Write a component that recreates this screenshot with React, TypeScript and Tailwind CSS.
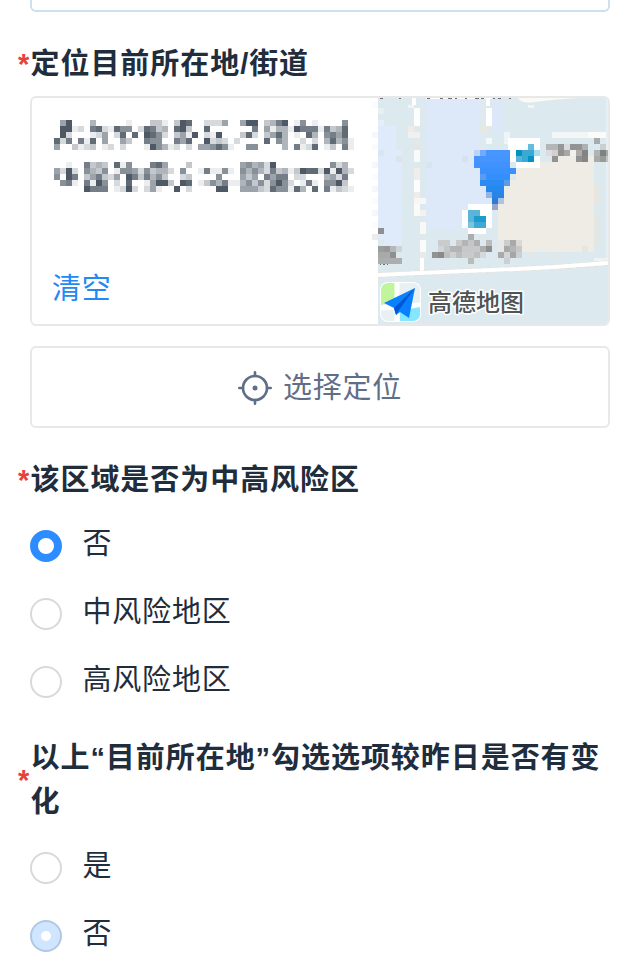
import React from "react";

const FONT = "font-['Liberation_Sans','Noto_Sans_CJK_SC',sans-serif]";

/* Censored address: each digit is the darkness of one 6px block. */
const LINE_ONE = [
  "05900040000010003310398002225005990347901601000060",
  "09912078218660287340893008000000070514419777173480",
  "09200012502808098620351902190003820358401084067580",
  "82707180500530076600758009232020000806400202048461",
  "50031230120200019641202055686100660000407128013071",
];
const LINE_TWO = [
  "00100734308160007850003000000005645290000000006240",
  "52920643601665263442060017116106464273413988291942",
  "60970357325097374630023000060005350757702200045270",
  "06710719602080015993098013647114636269620171066930",
  "00000977701292025100902000099005553286618408071321",
];

function MosaicLine({ rows }: { rows: string[] }) {
  return (
    <svg width="300" height="30" viewBox="0 0 300 30" shapeRendering="crispEdges" className="block">
      {rows.flatMap((row, y) =>
        row.split("").map((d, x) =>
          d === "0" ? null : (
            <rect key={`${x}-${y}`} x={x * 6} y={y * 6} width="6" height="6" fill="#1f2d3d" opacity={Number(d) * 0.088} />
          ),
        ),
      )}
    </svg>
  );
}

type Block = [number, number, number, number, string];

const BLOCKS: Block[] = [
  // pale zones
  [378, 120, 6, 42, "#e6eff8"],
  [378, 126, 18, 114, "#dfeafa"],
  [384, 150, 18, 96, "#dfeafa"],
  [378, 108, 6, 6, "#e6eff4"],
  [426, 98, 54, 132, "#dde9f8"],
  [480, 98, 6, 52, "#dfe9f0"],
  [432, 198, 60, 24, "#dde9f8"],
  [480, 150, 12, 60, "#dde9f8"],
  [492, 98, 12, 36, "#dce8f8"],
  [426, 162, 6, 6, "#d6e6ee"],
  [462, 156, 6, 6, "#d6e2ef"],
  [378, 150, 6, 6, "#d8e5f3"],
  [396, 156, 6, 6, "#d8e6ec"],
  // roads
  [412, 98, 4, 7, "#ffffff"],
  [408, 105, 6, 3, "#f3f3f1"],
  [414, 108, 6, 18, "#fdfdfc"],
  [408, 126, 6, 6, "#f2ebe5"],
  [408, 132, 12, 6, "#f0f1ee"],
  [414, 138, 6, 6, "#e2e9e8"],
  [414, 144, 6, 6, "#e5e5e2"],
  [414, 150, 6, 12, "#f8fbfb"],
  [414, 168, 6, 12, "#f1eeea"],
  [414, 180, 6, 12, "#fdfdfd"],
  [414, 192, 6, 6, "#efede9"],
  [414, 198, 12, 6, "#f8f7f3"],
  [414, 204, 6, 12, "#fafaf7"],
  [420, 210, 6, 6, "#f4f2ee"],
  [420, 222, 6, 12, "#f8f8f5"],
  [420, 240, 6, 12, "#fbfbfa"],
  [420, 252, 6, 6, "#e9ebe9"],
  [420, 258, 4, 16, "#ffffff"],
  [486, 98, 4, 8, "#ffffff"],
  [486, 108, 6, 18, "#ffffff"],
  [480, 126, 12, 6, "#e6e8e2"],
  [486, 138, 6, 6, "#f5f8f8"],
  [504, 132, 6, 12, "#eef5f8"],
  [528, 105, 6, 3, "#f1f5f4"],
  [552, 132, 42, 6, "#f3f6f6"],
  [588, 132, 20, 6, "#fbfbfa"],
  [606, 98, 2, 164, "#e6f0f4"],
  // building
  [516, 162, 78, 88, "#efebe5"],
  [498, 192, 96, 60, "#efebe5"],
  [504, 180, 12, 12, "#efebe5"],
  [552, 156, 42, 6, "#efebe5"],
  [594, 186, 6, 18, "#e9e6e0"],
  [594, 216, 6, 30, "#e4e6e2"],
  [498, 240, 12, 12, "#e7e9e6"],
  [528, 252, 6, 6, "#e3e7e5"],
  [552, 252, 6, 6, "#e2e7e6"],
  [582, 246, 6, 6, "#e5e6e2"],
  [594, 258, 14, 6, "#edf2f4"],
  // poi beside the pin
  [508, 138, 32, 12, "#ffffff"],
  [508, 150, 32, 12, "#ffffff"],
  [516, 162, 24, 6, "#ffffff"],
  [528, 144, 6, 6, "#66bcdc"],
  [516, 150, 6, 6, "#0092c7"],
  [522, 150, 12, 6, "#3ba9d4"],
  [534, 150, 6, 6, "#abddf0"],
  [516, 156, 6, 6, "#55b4d9"],
  [522, 156, 6, 6, "#3ba9d4"],
  [528, 156, 6, 6, "#0092c7"],
  // censored poi name
  [594, 138, 6, 6, "#a7abad"],
  [546, 144, 12, 6, "#b3b5b7"],
  [546, 150, 12, 6, "#dcdcdc"],
  [558, 144, 6, 6, "#969798"],
  [564, 144, 6, 6, "#d8dcdd"],
  [570, 144, 12, 6, "#929394"],
  [582, 144, 6, 6, "#aeb0b1"],
  [600, 144, 6, 6, "#c9ced1"],
  [552, 150, 6, 6, "#d0d0d0"],
  [558, 150, 6, 6, "#919191"],
  [564, 150, 6, 6, "#a8a7a6"],
  [570, 150, 6, 6, "#f1f0ef"],
  [576, 150, 6, 6, "#adacab"],
  [582, 150, 6, 6, "#838383"],
  [594, 150, 6, 6, "#b0b3b4"],
  [600, 150, 6, 6, "#808080"],
  [606, 150, 2, 6, "#a8abac"],
  [552, 156, 6, 6, "#929292"],
  [576, 156, 6, 6, "#929292"],
  [582, 156, 6, 6, "#858585"],
  [594, 156, 6, 6, "#a8a9aa"],
  [600, 156, 6, 6, "#999a9a"],
  [606, 156, 2, 6, "#c0c3c4"],
  // second poi
  [468, 204, 24, 6, "#ffffff"],
  [462, 210, 30, 18, "#ffffff"],
  [468, 228, 18, 6, "#ffffff"],
  [468, 210, 12, 6, "#5ab5d8"],
  [468, 216, 6, 6, "#5ab5d8"],
  [474, 216, 12, 6, "#1b9ccf"],
  [474, 222, 12, 6, "#3da9d4"],
  [468, 222, 6, 6, "#79c4e0"],
  // censored names, bottom
  [372, 234, 6, 6, "#ececec"],
  [378, 228, 6, 6, "#8f8f90"],
  [378, 246, 6, 6, "#9b9c9d"],
  [384, 246, 6, 6, "#979797"],
  [390, 246, 6, 6, "#b5b8ba"],
  [396, 246, 6, 6, "#ced3d6"],
  [378, 252, 12, 6, "#a8a9aa"],
  [390, 252, 6, 6, "#8f8f90"],
  [378, 258, 24, 6, "#acadae"],
  [468, 234, 6, 6, "#acadae"],
  [438, 240, 12, 6, "#cacbcc"],
  [456, 240, 6, 6, "#c8c9ca"],
  [462, 240, 6, 6, "#b5b5b6"],
  [468, 240, 6, 6, "#c4c5c6"],
  [474, 240, 6, 6, "#adb0b1"],
  [486, 240, 6, 6, "#b9bcbd"],
  [438, 246, 6, 6, "#d2d6d8"],
  [444, 246, 6, 6, "#c5c6c6"],
  [450, 246, 12, 6, "#b3b4b5"],
  [462, 246, 18, 6, "#c7c8c8"],
  [480, 246, 6, 6, "#adadae"],
  [486, 246, 6, 6, "#8d8e8e"],
  [432, 252, 6, 6, "#929393"],
  [438, 252, 6, 6, "#898a8a"],
  [444, 252, 6, 6, "#bec0c0"],
  [450, 252, 6, 6, "#cdcfd0"],
  [456, 252, 6, 6, "#bcbdbe"],
  [462, 252, 12, 6, "#c9caca"],
  [474, 252, 6, 6, "#bebfc0"],
  [480, 252, 6, 6, "#d4d9dc"],
  [468, 258, 6, 6, "#b9bcbd"],
  [510, 240, 6, 6, "#a9a9a9"],
  [504, 240, 6, 6, "#cccdcd"],
  [516, 240, 6, 6, "#dadada"],
  [504, 246, 6, 6, "#a9a9a9"],
  [510, 246, 6, 6, "#b5b5b5"],
  [516, 246, 6, 6, "#c7c7c7"],
  [498, 252, 6, 6, "#a8aaab"],
  [504, 252, 6, 6, "#d4d5d6"],
  [510, 252, 6, 6, "#a5a6a7"],
  [516, 252, 6, 6, "#ccd0d2"],
  [504, 258, 6, 6, "#cbd0d4"],
  // location pin
  [474, 150, 6, 6, "#bcd4fb"],
  [480, 150, 6, 6, "#72a9fb"],
  [486, 150, 24, 6, "#4795ff"],
  [474, 156, 36, 6, "#4594ff"],
  [474, 162, 36, 6, "#4191ff"],
  [480, 168, 36, 6, "#3a90fc"],
  [480, 174, 6, 6, "#5a9af1"],
  [486, 174, 24, 6, "#338ffb"],
  [480, 180, 24, 6, "#2b8bf3"],
  [504, 180, 6, 6, "#5a9bea"],
  [486, 186, 18, 6, "#2588ec"],
  [486, 192, 6, 6, "#8eb4e8"],
  [492, 192, 12, 6, "#2586e8"],
  [492, 198, 6, 6, "#2a7bdc"],
  [498, 198, 6, 6, "#aec3e3"],
  [492, 204, 6, 6, "#98a5c8"],
];

/* Feet of the place names cut off by the top edge: x, width. */
const CUT_TEXT: [number, number][] = [
  [380, 3], [399, 2], [427, 3], [440, 3], [448, 4], [455, 2], [465, 2], [475, 4], [481, 3], [493, 2], [498, 3], [509, 2],
];

function MapPreview() {
  return (
    <svg width="236" height="226" viewBox="372 98 236 226" className="block shrink-0">
      <rect x="378" y="98" width="230" height="226" fill="#dce9ee" />
      <g shapeRendering="crispEdges">
        {[102, 132, 144, 162, 174, 186, 198, 210, 222].map((y, i) => (
          <rect key={y} x="372" y={y} width="6" height="6" fill={i % 2 ? "#f4f8fd" : "#fafbfd"} />
        ))}
        {BLOCKS.map(([x, y, w, h, fill], i) => (
          <rect key={i} x={x} y={y} width={w} height={h} fill={fill} />
        ))}
        <rect x="426" y="98" width="66" height="1" fill="#ffffff" />
        {CUT_TEXT.map(([x, w]) => (
          <rect key={x} x={x} y="98" width={w} height="1" fill="#6d6f70" />
        ))}
      </g>
      <path d="M518 98 Q522 104 534 102 Q556 99 580 98Z" fill="#fbfaf4" />
      <path d="M378 275 Q440 272 492 270 Q550 268 608 263" fill="none" stroke="#ead9cb" strokeWidth="5" strokeDasharray="5 4" />
      <path d="M378 275 Q440 272 492 270 Q550 268 608 263" fill="none" stroke="#ffffff" strokeWidth="4" />
      <g fill="#6f7172">
        <rect x="380" y="264" width="1" height="1" />
        <rect x="383" y="264" width="2" height="1" />
        <rect x="387" y="264" width="1" height="1" />
      </g>
      <clipPath id="amap-tile">
        <rect x="381" y="283" width="39" height="38" rx="7" />
      </clipPath>
      <rect x="380" y="282" width="41" height="40" rx="8" fill="#ffffff" />
      <g clipPath="url(#amap-tile)">
        <rect x="381" y="283" width="39" height="39" fill="#e9f0f1" />
        <path d="M381 283H395V298L389 302L381 305Z" fill="#c1f59b" />
        <path d="M397 283V299 M381 308L420 305" stroke="#ffffff" strokeWidth="5" fill="none" />
        <path d="M400 311L420 307V322H400Z" fill="#86e5ff" />
        <path d="M397 309V322" stroke="#ffffff" strokeWidth="5" />
      </g>
      <path d="M415 288L384 303L394 308L396 315L400 312L409 318Z" fill="#0a80ff" />
      <path d="M415 288L394 308L396 315L399 310Z" fill="#0057d2" />
      <text
        x="428"
        y="311"
        fontSize="24"
        fontWeight="500"
        fill="#505455"
        stroke="#ffffff"
        strokeWidth="3"
        strokeLinejoin="round"
        paintOrder="stroke"
        className="font-['Noto_Sans_CJK_SC',sans-serif]"
      >
        高德地图
      </text>
    </svg>
  );
}

function Heading({ children }: { children: React.ReactNode }) {
  return (
    <div className="flex items-center pl-[18px] text-[29px] font-bold leading-[44px] tracking-[0.95px]">
      <span className="w-[12.5px] shrink-0 tracking-normal text-[#e8403c]">*</span>
      <h2 className="w-[580px] shrink-0">{children}</h2>
    </div>
  );
}

function Radio({ label, state = "off" }: { label: string; state?: "off" | "on" | "disabled" }) {
  return (
    <label className="flex h-[68px] items-center gap-[20.5px] text-[29px] leading-[44px] tracking-[0.8px]">
      {state === "off" && <span className="size-8 rounded-full border-2 border-[#d9d9d9]" />}
      {state === "on" && <span className="size-8 rounded-full border-8 border-[#2d8cff]" />}
      {state === "disabled" && (
        <span className="flex size-8 items-center justify-center rounded-full border-2 border-[#b0c8e2] bg-[#d0e5ff]">
          <span className="size-2.5 rounded-full bg-white" />
        </span>
      )}
      <span className="-mt-1">{label}</span>
    </label>
  );
}

export default function App() {
  return (
    <main className={`h-[960px] w-[640px] overflow-hidden bg-white text-[#1f2d3d] ${FONT}`}>
      <div className="mx-[30px] h-3 rounded-b-md border-2 border-t-0 border-[#cfdfeb]" />
      <div className="mt-[30px]">
        <Heading>定位目前所在地/街道</Heading>
      </div>

      <section className="mx-[30px] mt-2.5 flex h-[230px] justify-between overflow-hidden rounded-md border-2 border-[#e8e8e8]">
        <div className="flex flex-col pl-5 pt-[22px]">
          <div className="flex flex-col gap-3 pl-0.5">
            <MosaicLine rows={LINE_ONE} />
            <MosaicLine rows={LINE_TWO} />
          </div>
          <button className="mt-[75px] self-start text-[29px] leading-[44px] tracking-[0.8px] text-[#2389f5]">清空</button>
        </div>
        <MapPreview />
      </section>

      <button className="mx-[30px] mt-5 flex h-[82px] w-[580px] items-center justify-center gap-[11px] rounded-md border-2 border-[#e8e8e8] pt-0.5 text-[29px] leading-[44px] tracking-[0.8px] text-[#5f6f88]">
        <svg width="34" height="34" viewBox="0 0 34 34" fill="none" stroke="currentColor" strokeWidth="2.6" strokeLinecap="round">
          <circle cx="17" cy="17" r="12" />
          <path d="M17 1.3V5M17 29V32.7M1.3 17H5M29 17H32.7" />
          <circle cx="17" cy="17" r="2.5" fill="currentColor" stroke="none" />
        </svg>
        <span>选择定位</span>
      </button>

      <div className="mt-[30px]">
        <Heading>该区域是否为中高风险区</Heading>
      </div>
      <div className="ml-[30px] mt-2.5">
        <Radio label="否" state="on" />
        <Radio label="中风险地区" />
        <Radio label="高风险地区" />
      </div>

      <div className="mt-5">
        <Heading>以上“目前所在地”勾选选项较昨日是否有变化</Heading>
      </div>
      <div className="ml-[30px] mt-2.5">
        <Radio label="是" />
        <Radio label="否" state="disabled" />
      </div>
    </main>
  );
}
